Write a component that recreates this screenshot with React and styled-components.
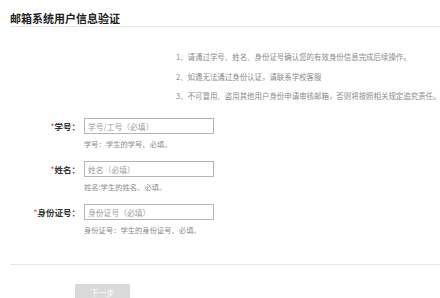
import React from "react";
import styled, { createGlobalStyle } from "styled-components";

const Global = createGlobalStyle`
  html, body { margin: 0; padding: 0; background: #fff; }
  body { font-family: "Noto Sans CJK SC", "Noto Sans", sans-serif; color: #333; }
  * { box-sizing: border-box; }
`;

const Page = styled.div`
  width: 440px;
  height: 298px;
  overflow: hidden;
`;

const Header = styled.h1`
  margin: 0 0 0 10px;
  padding: 11px 0 1px;
  font-size: 11px;
  line-height: 14px;
  font-weight: 700;
  color: #222;
  border-bottom: 1px solid #e6e6e6;
`;

const Notes = styled.ol`
  list-style: none;
  margin: 20px 0 0;
  padding: 0 0 0 176px;
  font-size: 7.45px;
  line-height: 19.5px;
  color: #8a8a8a;
  white-space: nowrap;
`;

const Form = styled.div`
  margin-top: 12.5px;
  display: flex;
  flex-direction: column;
  gap: 11px;
`;

const Row = styled.div`
  display: grid;
  grid-template-columns: 84px 130px;
`;

const Label = styled.label`
  text-align: right;
  padding-right: 4px;
  font-size: 8.5px;
  line-height: 16px;
  font-weight: 700;
  color: #333;
  white-space: nowrap;
`;

const Star = styled.span`
  color: #e4393c;
  font-weight: 400;
`;

const Field = styled.div`
  display: flex;
  flex-direction: column;
`;

const Input = styled.input`
  width: 130px;
  height: 16px;
  border: 1px solid #b5b5b5;
  padding: 0 3px;
  font-family: inherit;
  font-size: 7.8px;
  color: #333;
  outline: none;
  &::placeholder { color: #9a9a9a; }
`;

const Hint = styled.div`
  margin-top: 4px;
  font-size: 7.3px;
  line-height: 12px;
  color: #8a8a8a;
  white-space: nowrap;
`;

const Footer = styled.div`
  margin: 28px 0 0 10px;
  border-top: 1px solid #e6e6e6;
  padding: 12px 0 0 65px;
`;

const NextButton = styled.button`
  width: 55px;
  height: 17px;
  border: none;
  background: #dadada;
  color: #fff;
  font-family: inherit;
  font-size: 8px;
  padding: 0;
`;

const fields = [
  { label: "学号：", ph: "学号/工号（必填）", hint: "学号：学生的学号、必填。" },
  { label: "姓名：", ph: "姓名（必填）", hint: "姓名:学生的姓名、必填。" },
  { label: "身份证号：", ph: "身份证号（必填）", hint: "身份证号：学生的身份证号、必填。" },
];

export default function App() {
  return (
    <Page>
      <Global />
      <Header>邮箱系统用户信息验证</Header>
      <Notes>
        <li>1、请通过学号、姓名、身份证号确认您的有效身份信息完成后续操作。</li>
        <li>2、如遇无法通过身份认证，请联系学校客服</li>
        <li>3、不可冒用、盗用其他用户身份申请审核邮箱，否则将按照相关规定追究责任。</li>
      </Notes>
      <Form>
        {fields.map((f) => (
          <Row key={f.label}>
            <Label>
              <Star>*</Star>
              {f.label}
            </Label>
            <Field>
              <Input placeholder={f.ph} />
              <Hint>{f.hint}</Hint>
            </Field>
          </Row>
        ))}
      </Form>
      <Footer>
        <NextButton>下一步</NextButton>
      </Footer>
    </Page>
  );
}
